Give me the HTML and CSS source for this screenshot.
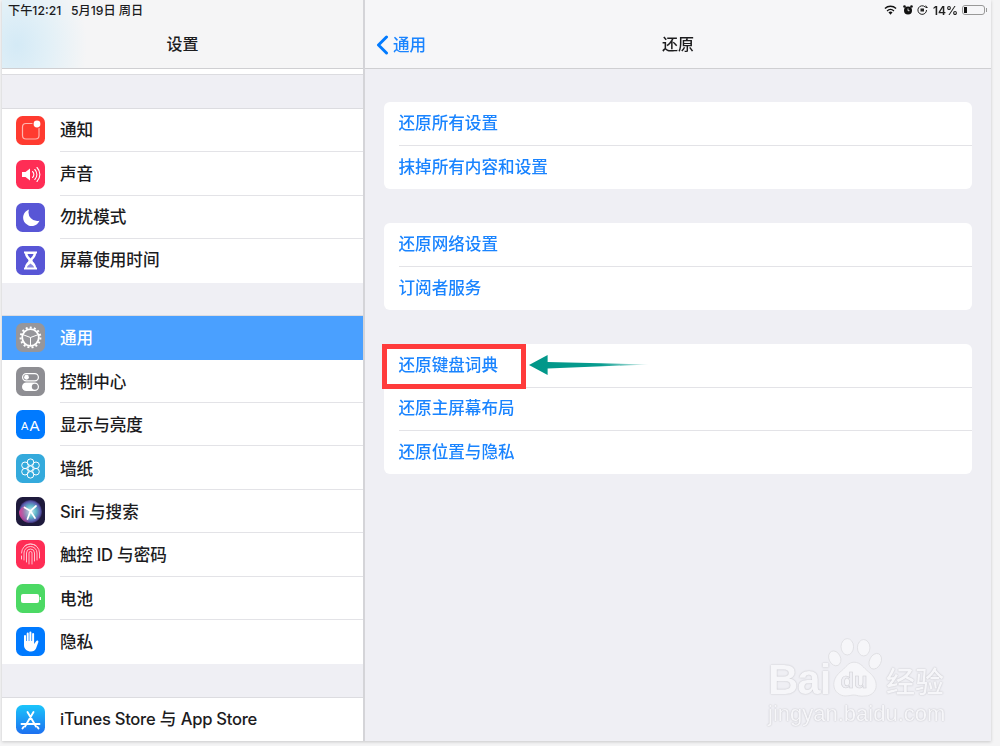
FILE: index.html
```html
<!DOCTYPE html>
<html lang="zh-CN">
<head>
<meta charset="utf-8">
<title>还原</title>
<link rel="stylesheet" href="styles.css">
</head>
<body>
<div class="screen">
  <aside class="sidebar">
    <header class="nav nav-side">
      <div class="status-left">下午12:21&nbsp;&nbsp;&nbsp;5月19日 周日</div>
      <h1 class="title">设置</h1>
    </header>
    <div class="strip"></div>
    <div class="gap"></div>
    <ul class="group">
      <li class="row"><svg class="icon" viewBox="0 0 29 29"><rect width="29" height="29" rx="6.500" fill="#ff3b30"/><rect x="6.500" y="7.500" width="16.500" height="15.500" rx="3.500" fill="none" stroke="#ffb5af" stroke-width="1.200"/><circle cx="21" cy="8" r="4.600" fill="#ff3b30"/><circle cx="21" cy="8" r="3.400" fill="#fff"/></svg><span class="label">通知</span></li>
      <li class="row"><svg class="icon" viewBox="0 0 29 29"><rect width="29" height="29" rx="6.500" fill="#ff2d55"/><path d="M6 12h3.500L14 8.500v12L9.500 17H6z" fill="#fff"/><path d="M16.500 11.500a4 4 0 0 1 0 6M18.800 9.500a7 7 0 0 1 0 10M21 7.500a10 10 0 0 1 0 14" fill="none" stroke="#fff" stroke-width="1.100" stroke-linecap="round"/></svg><span class="label">声音</span></li>
      <li class="row"><svg class="icon" viewBox="0 0 29 29"><rect width="29" height="29" rx="6.500" fill="#5856d6"/><path d="M13 6.500a8.500 8.500 0 1 0 10.500 11.300A8.800 8.800 0 0 1 13 6.500z" fill="#fff"/></svg><span class="label">勿扰模式</span></li>
      <li class="row"><svg class="icon" viewBox="0 0 29 29"><rect width="29" height="29" rx="6.500" fill="#5856d6"/><path d="M8 5.500h13v2h-1c0 4-3.500 5.500-3.500 7s3.500 3 3.500 7h1v2H8v-2h1c0-4 3.500-5.500 3.500-7S9 11.500 9 7.500H8z" fill="#fff"/><path d="M11.500 8h6c-.3 2-2 3-3 4.500-1-1.500-2.700-2.500-3-4.500z" fill="#5856d6"/><path d="M10.800 21.500c.6-1.800 2.200-2.700 3.700-4 1.500 1.300 3.100 2.200 3.700 4z" fill="#8c8ae0"/></svg><span class="label">屏幕使用时间</span></li>
    </ul>
    <div class="gap gap-mid"></div>
    <ul class="group group-general">
      <li class="row row-active"><svg class="icon" viewBox="0 0 29 29"><rect width="29" height="29" rx="6.500" fill="#96969b"/><circle cx="14.500" cy="14.500" r="8.300" fill="none" stroke="#fff" stroke-width="1.800"/><circle cx="14.500" cy="14.500" r="9.900" fill="none" stroke="#fff" stroke-width="2" stroke-dasharray="2 2.145"/><path d="M14.500 14.500L7 11.700M14.500 14.500L22 11.700M14.500 14.500V22.500" stroke="#fff" stroke-width="1"/></svg><span class="label">通用</span></li>
      <li class="row"><svg class="icon" viewBox="0 0 29 29"><rect width="29" height="29" rx="6.500" fill="#8e8e93"/><rect x="6.600" y="6.600" width="15.800" height="7.300" rx="3.650" fill="none" stroke="#fff" stroke-width="1.200"/><circle cx="10.500" cy="10.250" r="2.400" fill="#fff"/><rect x="6" y="15.500" width="17" height="8.500" rx="4.250" fill="#fff"/><circle cx="18.800" cy="19.750" r="3" fill="#8e8e93"/></svg><span class="label">控制中心</span></li>
      <li class="row"><svg class="icon" viewBox="0 0 29 29"><rect width="29" height="29" rx="6.500" fill="#007aff"/><text class="aa-small" x="5" y="20">A</text><text class="aa-big" x="13.500" y="21">A</text></svg><span class="label">显示与亮度</span></li>
      <li class="row"><svg class="icon" viewBox="0 0 29 29"><rect width="29" height="29" rx="6.500" fill="#34aadc"/><g fill="none" stroke="#fff" stroke-width="1"><circle cx="14.500" cy="14.500" r="2.600"/><circle cx="14.500" cy="8.200" r="3.300"/><circle cx="14.500" cy="20.800" r="3.300"/><circle cx="9" cy="11.300" r="3.300"/><circle cx="20" cy="11.300" r="3.300"/><circle cx="9" cy="17.700" r="3.300"/><circle cx="20" cy="17.700" r="3.300"/></g></svg><span class="label">墙纸</span></li>
      <li class="row"><svg class="icon" viewBox="0 0 29 29"><defs><radialGradient id="siriA" cx="50%" cy="50%" r="50%"><stop offset="0" stop-color="#cfeef5"/><stop offset=".5" stop-color="#5fb8c8"/><stop offset=".85" stop-color="#5a5fb0"/><stop offset="1" stop-color="#3a2f70"/></radialGradient><linearGradient id="siriB" x1="0" y1="0" x2="1" y2="0"><stop offset="0" stop-color="#f0489a" stop-opacity=".85"/><stop offset="1" stop-color="#f0489a" stop-opacity="0"/></linearGradient></defs><rect width="29" height="29" rx="6.500" fill="#1e1a3c"/><circle cx="14.500" cy="14.500" r="11.500" fill="url(#siriA)"/><path d="M3 14.500a11.500 11.500 0 0 0 11.500 11.500L14 15 9 8.500A11.500 11.500 0 0 0 3 14.500z" fill="url(#siriB)"/><path d="M8.500 10.500l6 3.500 5.500-5M14.500 14l-3 8M14.500 14l4.500 7" fill="none" stroke="#fff" stroke-width="1.700" stroke-linecap="round"/></svg><span class="label"><span class="latin">Siri</span> 与搜索</span></li>
      <li class="row"><svg class="icon" viewBox="0 0 29 29"><rect width="29" height="29" rx="6.500" fill="#ff2d55"/><g fill="none" stroke="#ffc4d0" stroke-width="1" stroke-linecap="round"><path d="M5.500 13a9 9 0 0 1 18 0v5"/><path d="M5.500 16v3M8 20v-7a6.500 6.500 0 0 1 13 0v7"/><path d="M10.500 22v-9a4 4 0 0 1 8 0v8"/><path d="M13 24v-11a1.500 1.500 0 0 1 3 0v11"/><path d="M9 5.500a11 11 0 0 1 11 0"/></g></svg><span class="label"><span class="latin">触控 ID</span> 与密码</span></li>
      <li class="row"><svg class="icon" viewBox="0 0 29 29"><rect width="29" height="29" rx="6.500" fill="#4cd964"/><rect x="5" y="10" width="18" height="9" rx="2" fill="#fff"/><rect x="23.700" y="13" width="1.300" height="3" fill="#fff"/></svg><span class="label">电池</span></li>
      <li class="row"><svg class="icon" viewBox="0 0 29 29"><rect width="29" height="29" rx="6.500" fill="#007aff"/><path d="M8 15.500V9a1 1 0 0 1 2 0v5h.7V6.500a1 1 0 0 1 2 0V14h.7V5.500a1 1 0 0 1 2 0V14h.7V7a1 1 0 0 1 2 0v10l2-2.800c.8-1.200 2.800-.5 2.200 1L20 21.500c-1 2-2.500 3-5 3-4 0-7-2.500-7-6.500z" fill="#fff"/></svg><span class="label">隐私</span></li>
    </ul>
    <div class="gap gap-end"></div>
    <ul class="group">
      <li class="row row-last"><svg class="icon" viewBox="0 0 29 29"><defs><linearGradient id="storeG" x1="0" y1="0" x2="0" y2="1"><stop offset="0" stop-color="#1bc5fb"/><stop offset="1" stop-color="#1d70f0"/></linearGradient></defs><rect width="29" height="29" rx="6.500" fill="url(#storeG)"/><path d="M11.500 7l8.500 14.500M17.500 7L9 21.500M5.500 19h18M7.500 22l-1 1.500M21.500 22l1 1.500" fill="none" stroke="#fff" stroke-width="1.900" stroke-linecap="round"/></svg><span class="label"><span class="latin">iTunes Store</span> 与 <span class="latin">App Store</span></span></li>
    </ul>
  </aside>

  <main class="detail">
    <header class="nav nav-detail">
      <div class="status-right">
        <svg class="s-wifi" viewBox="0 0 14 10"><path d="M7 10L4.800 7.500a3.300 3.300 0 0 1 4.400 0z" fill="#111"/><path d="M3.300 6a5.400 5.400 0 0 1 7.400 0M1 3.400a8.800 8.800 0 0 1 12 0" fill="none" stroke="#111" stroke-width="1.500"/></svg>
        <svg class="s-alarm" viewBox="0 0 10 10"><circle cx="5" cy="5.500" r="4" fill="#111"/><circle cx="1.500" cy="1.500" r="1.300" fill="#111"/><circle cx="8.500" cy="1.500" r="1.300" fill="#111"/><path d="M5 3.500v2.200h1.500" stroke="#fff" stroke-width=".8" fill="none"/></svg>
        <svg class="s-lock" viewBox="0 0 11 10"><path d="M9.500 5a4.300 4.300 0 1 1-1.300-3" fill="none" stroke="#222" stroke-width="1"/><path d="M8.500 0v3h2.500z" fill="#222"/><rect x="3.500" y="3.500" width="3.500" height="3" fill="#222"/></svg>
        <span class="s-pct">14%</span>
        <span class="s-batt"><span class="s-batt-level"></span></span><span class="s-batt-tip"></span>
      </div>
      <div class="nav-bar">
        <div class="back"><svg class="chev" viewBox="0 0 13 20"><path d="M10.500 2L2.500 10l8 8" fill="none" stroke="#007aff" stroke-width="3" stroke-linecap="round" stroke-linejoin="round"/></svg><span>通用</span></div>
        <h2 class="title">还原</h2>
        <div></div>
      </div>
    </header>
    <div class="content">
      <ul class="card">
        <li class="item">还原所有设置</li>
        <li class="item">抹掉所有内容和设置</li>
      </ul>
      <ul class="card">
        <li class="item">还原网络设置</li>
        <li class="item">订阅者服务</li>
      </ul>
      <ul class="card card-marked">
        <li class="item">还原键盘词典</li>
        <li class="item">还原主屏幕布局</li>
        <li class="item">还原位置与隐私</li>
        <li class="redbox"></li>
        <li class="arrow"><svg viewBox="0 0 116 22" width="116" height="22" preserveAspectRatio="none"><defs><linearGradient id="arrowG" x1="0" y1="0" x2="1" y2="0"><stop offset="0" stop-color="#009688"/><stop offset=".6" stop-color="#079c8f"/><stop offset="1" stop-color="#079c8f" stop-opacity=".1"/></linearGradient></defs><path d="M0 11L18 1v7l98 2.500-98 4V21z" fill="url(#arrowG)"/></svg></li>
      </ul>
    </div>
    <div class="watermark">
      <svg class="paw" viewBox="0 0 56 62"><g fill="#f6f6f9" stroke="#dcdce0" stroke-width=".8"><ellipse cx="7" cy="21" rx="6" ry="8" transform="rotate(-25 7 21)"/><ellipse cx="20" cy="9" rx="6.500" ry="8.500"/><ellipse cx="37" cy="10" rx="6.500" ry="8.500"/><ellipse cx="49" cy="24" rx="6" ry="8.500" transform="rotate(25 49 24)"/><path d="M27 25c-6 0-8 5-13 9-4 3-8 8-8 14 0 8 7 12 12 12 4 0 6-1 9-1s6 2 12 1c5 0 11-4 11-11 0-6-4-11-8-14-5-4-8-10-15-10z"/></g><text class="paw-du" x="13" y="52">du</text></svg>
      <div class="wm-top"><span class="wm-bai">Bai</span><span class="wm-cn">经验</span></div>
      <div class="wm-url">jingyan.baidu.com</div>
    </div>
  </main>
</div>
</body>
</html>
```

FILE: styles.css
```css
* { box-sizing: border-box; margin: 0; padding: 0; }
html, body { width: 1000px; height: 746px; overflow: hidden; background: #f4f4f5; }
body { padding: 0 9px 5px 2px; font-family: Inter, "Noto Sans CJK SC", sans-serif; color: #1c1c1e; }
ul { list-style: none; }
.screen { display: flex; height: 741px; background: #efeff4; box-shadow: 0 1px 3px rgba(0,0,0,.18); filter: blur(.35px); }

.sidebar { width: 361px; flex: none; overflow: hidden; background: #efeff4; }
.detail { position: relative; flex: 1; border-left: 2px solid #d4d4d8; display: flex; flex-direction: column; }

.nav { height: 69px; border-bottom: 1px solid #cfcfd2; flex: none; }
.nav-side { background: radial-gradient(ellipse 70px 90px at 15px 45px, #d4eaf6 0%, #e2f0f7 45%, rgba(240,244,246,0) 100%), #f5f5f6; padding: 4px 6px 0; }
.nav-detail { background: #f6f6f8; padding-top: 3px; }
.status-left { font-size: 12.200px; line-height: 14px; font-weight: 500; height: 23px; }
.title { font-size: 16px; font-weight: 500; line-height: 24px; text-align: center; }
.nav-side .title { margin-top: 5px; }
.nav-detail .title { position: relative; top: -1px; }

.status-right { display: flex; align-items: center; justify-content: flex-end; height: 14px; padding-right: 4px; font-size: 12px; font-weight: 600; }
.s-wifi { width: 13px; height: 10px; margin-right: 6px; }
.s-alarm { width: 10px; height: 10px; margin-right: 4px; }
.s-lock { width: 11px; height: 10px; margin-right: 5px; }
.s-pct { margin-right: 4px; color: #222; }
.s-batt { width: 23px; height: 10px; border: 1px solid #999; border-radius: 3px; padding: 1px; display: block; }
.s-batt-level { display: block; width: 3px; height: 100%; background: #111; }
.s-batt-tip { width: 1px; height: 4px; background: #999; margin-left: 1px; }

.nav-bar { display: grid; grid-template-columns: 1fr auto 1fr; align-items: center; height: 24px; margin-top: 15px; }
.back { display: flex; align-items: center; gap: 4px; padding-left: 11px; color: #1a84ff; font-size: 16.600px; font-weight: 500; }
.back span { margin-bottom: 2px; }
.chev { width: 13px; height: 20px; }

.strip { height: 6px; background: #fff; border-bottom: 1px solid #dcdce0; }
.gap { height: 34px; border-bottom: 1px solid #dcdce0; }
.gap-mid { height: 33.500px; }
.gap-end { height: 34.500px; }

.group { background: #fff; }
.row { position: relative; display: flex; align-items: center; height: 43.400px; padding-left: 14px; gap: 15px; font-size: 16.600px; font-weight: 500; }
.group-general .row { height: 43.450px; }
.row::after { content: ""; position: absolute; left: 58px; right: 0; bottom: 0; height: 1px; background: #e3e3e7; }
.row:last-child::after { display: none; }
.row-active { background: #4aa0ff; color: #fff; }
.row-active::after { display: none; }
.group .row-last { height: 43px; }
.icon { width: 29px; height: 29px; flex: none; }
.label { white-space: nowrap; margin-bottom: 3px; }
.group-general .label { margin-bottom: 1px; }
.latin { letter-spacing: -.3px; }
.aa-small { font: 500 11px "Liberation Sans", sans-serif; fill: #fff; }
.aa-big { font: 400 15px "Liberation Sans", sans-serif; fill: #fff; }

.content { padding: 33px 19px 0 19px; display: flex; flex-direction: column; gap: 34px; }
.card { position: relative; background: #fff; border-radius: 6px; }
.item { display: flex; align-items: center; height: 43.400px; padding: 0 0 2.500px 14.500px; color: #1a84ff; font-size: 16.600px; font-weight: 500; position: relative; }
.item + .item::before { content: ""; position: absolute; left: 15px; right: 0; top: 0; height: 1px; background: #e3e3e7; }
.redbox { position: absolute; left: -2px; top: 0; width: 144px; height: 45px; border: 5px solid #ff3b3b; }
.arrow { position: absolute; left: 145px; top: 10px; height: 22px; }
.arrow svg { display: block; width: 120px; }

.watermark { position: absolute; left: 403px; top: 638px; width: 180px; height: 100px; color: #f6f6f9; }
.paw { position: absolute; left: 60px; top: 0; width: 54px; height: 60px; }
.paw-du { font: 700 23px "Liberation Sans", sans-serif; fill: #efeff4; stroke: #d0d0d5; stroke-width: .6; }
.wm-top { position: absolute; left: 0; top: 24px; width: 176px; height: 36px; display: flex; justify-content: space-between; align-items: center; text-shadow: 0 0 1.500px #b0b0b6; }
.wm-bai { font: 700 42px "Liberation Sans", sans-serif; letter-spacing: -1px; }
.wm-cn { font: 500 29px "Noto Sans CJK SC", sans-serif; letter-spacing: 0; }
.wm-url { position: absolute; left: 0; top: 63px; width: 180px; font: 400 22px "Liberation Sans", sans-serif; line-height: 26px; text-shadow: 0 0 1.500px #b0b0b6; white-space: nowrap; }
```
